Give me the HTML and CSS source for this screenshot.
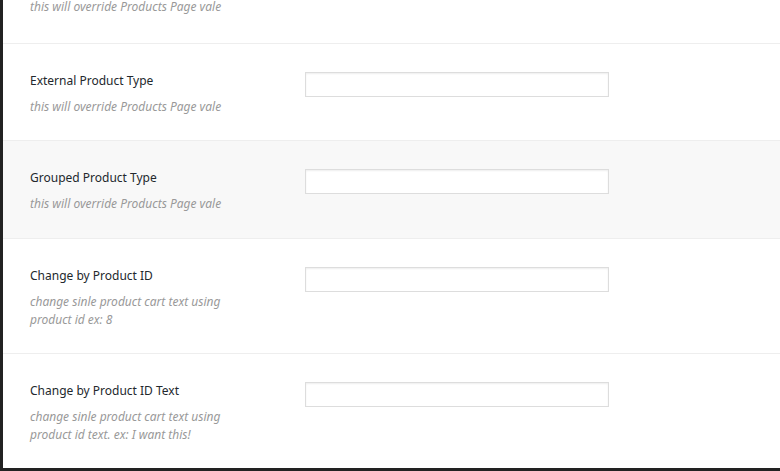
FILE: index.html
```html
<!DOCTYPE html>
<html lang="en">
<head>
    <meta charset="UTF-8">
    <meta name="viewport" content="width=device-width, initial-scale=1.0">
    <title>Cart Text Settings</title>
    <link rel="stylesheet" href="styles.css">
</head>
<body>
    <div class="settings-panel">
        <div class="settings-row row-top">
            <div class="row-label">
                <p class="description">this will override Products Page vale</p>
            </div>
        </div>

        <div class="settings-row">
            <div class="row-label">
                <label for="externalType">External Product Type</label>
                <p class="description">this will override Products Page vale</p>
            </div>
            <div class="row-field">
                <input type="text" id="externalType">
            </div>
        </div>

        <div class="settings-row alt">
            <div class="row-label">
                <label for="groupedType">Grouped Product Type</label>
                <p class="description">this will override Products Page vale</p>
            </div>
            <div class="row-field">
                <input type="text" id="groupedType">
            </div>
        </div>

        <div class="settings-row">
            <div class="row-label">
                <label for="productId">Change by Product ID</label>
                <p class="description">change sinle product cart text using product id ex: 8</p>
            </div>
            <div class="row-field">
                <input type="text" id="productId">
            </div>
        </div>

        <div class="settings-row">
            <div class="row-label">
                <label for="productIdText">Change by Product ID Text</label>
                <p class="description">change sinle product cart text using product id text. ex: I want this!</p>
            </div>
            <div class="row-field">
                <input type="text" id="productIdText">
            </div>
        </div>
    </div>
</body>
</html>
```

FILE: styles.css
```css
html, body {
    margin: 0;
    padding: 0;
    height: 100%;
}

body {
    font-family: "Noto Sans", "Open Sans", sans-serif;
    background-color: #222;
    overflow: hidden;
}

.settings-panel {
    margin-left: 3px;
    height: 468px;
    background-color: #fff;
    overflow: hidden;
}

.settings-row {
    display: flex;
    padding: 28px 0 24px 27px;
    border-bottom: 1px solid #eee;
}

.settings-row.row-top {
    padding: 0 0 29px 27px;
}

.row-top .description {
    line-height: 14px;
}

.settings-row.alt {
    background-color: #f8f8f8;
    padding-bottom: 25px;
}

.row-label {
    width: 275px;
    flex-shrink: 0;
}

.row-label label {
    display: block;
    font-size: 12px;
    line-height: 18px;
    color: #23282d;
    margin-bottom: 8px;
}

.description {
    margin: 0;
    width: 200px;
    font-size: 12px;
    line-height: 18px;
    font-style: italic;
    color: #999;
}

.row-field input {
    display: block;
    width: 304px;
    height: 25px;
    box-sizing: border-box;
    border: 1px solid #ddd;
    box-shadow: inset 0 1px 2px rgba(0, 0, 0, 0.07);
    background-color: #fff;
    padding: 3px 5px;
    margin: 0;
    font-size: 13px;
}
```
